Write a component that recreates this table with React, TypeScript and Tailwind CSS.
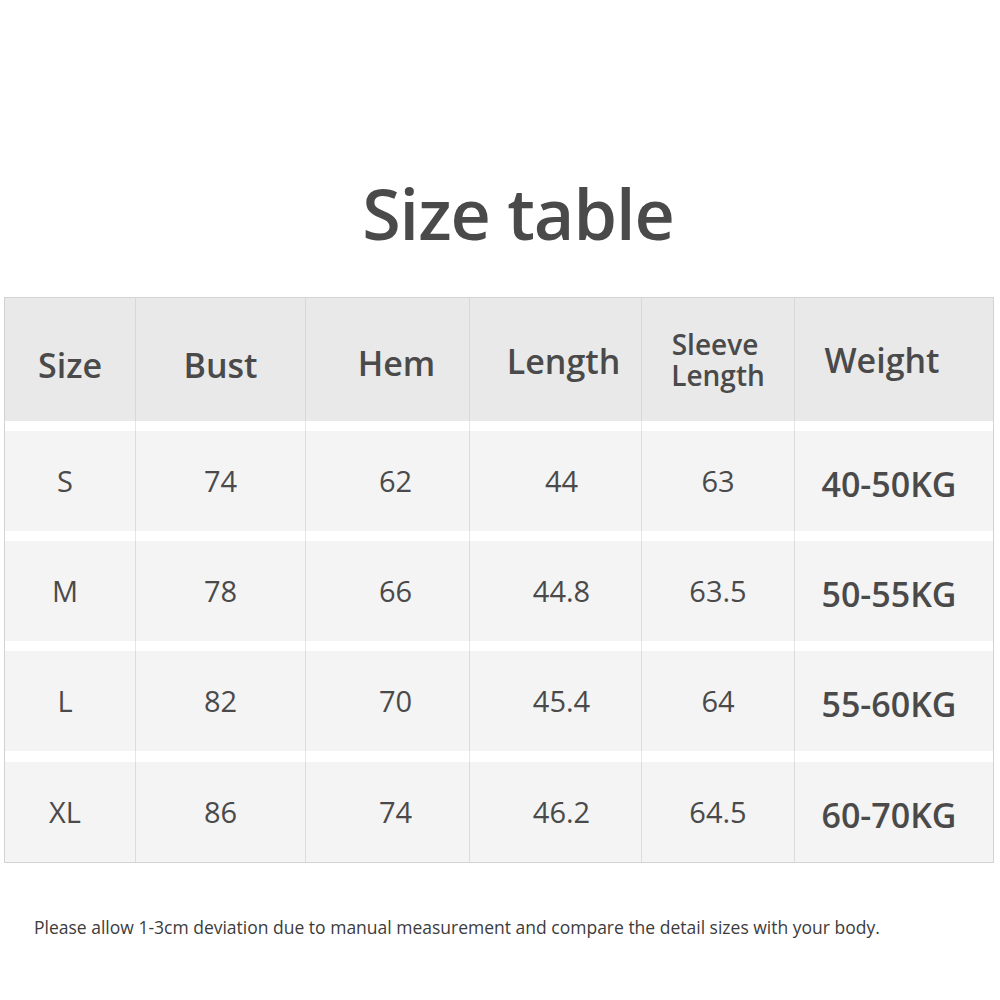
import React from "react";

const font = { fontFamily: '"Open Sans", "Noto Sans", sans-serif' };

type Row = { size: string; bust: string; hem: string; length: string; sleeve: string; weight: string };

const rows: Row[] = [
  { size: "S", bust: "74", hem: "62", length: "44", sleeve: "63", weight: "40-50KG" },
  { size: "M", bust: "78", hem: "66", length: "44.8", sleeve: "63.5", weight: "50-55KG" },
  { size: "L", bust: "82", hem: "70", length: "45.4", sleeve: "64", weight: "55-60KG" },
  { size: "XL", bust: "86", hem: "74", length: "46.2", sleeve: "64.5", weight: "60-70KG" },
];

function GapRow({ h }: { h: string }) {
  return (
    <div className={`flex ${h} bg-white`}>
      <div className="w-[131px] border-r border-[#e6e6e6]" />
      <div className="w-[170px] border-r border-[#e6e6e6]" />
      <div className="w-[164px] border-r border-[#e6e6e6]" />
      <div className="w-[172px] border-r border-[#e6e6e6]" />
      <div className="w-[153px] border-r border-[#e6e6e6]" />
      <div className="w-[198px]" />
    </div>
  );
}

function DataRow({ r }: { r: Row }) {
  return (
    <div className="flex h-[100px] bg-[#f4f4f4] text-[#4a4a4a]">
      <div className="w-[131px] border-r border-[#dcdcdc] flex items-center justify-center pr-[10px] text-[29px]">{r.size}</div>
      <div className="w-[170px] border-r border-[#dcdcdc] flex items-center justify-center text-[29px]">{r.bust}</div>
      <div className="w-[164px] border-r border-[#dcdcdc] flex items-center justify-center pl-[16px] text-[29px]">{r.hem}</div>
      <div className="w-[172px] border-r border-[#dcdcdc] flex items-center justify-center pl-[12px] text-[29px]">{r.length}</div>
      <div className="w-[153px] border-r border-[#dcdcdc] flex items-center justify-center text-[29px]">{r.sleeve}</div>
      <div className="w-[198px] flex items-center justify-center pr-[10px] pt-[6px] text-[34px] font-semibold">{r.weight}</div>
    </div>
  );
}

export default function App() {
  return (
    <div className="w-[1000px] h-[1000px] bg-white relative" style={font}>
      <div className="h-[297px] flex justify-center pt-[171px]">
        <h1 className="text-[70px] leading-[84px] font-semibold text-[#4a4a4a] pl-[36px] tracking-[-1px]">Size table</h1>
      </div>
      <div className="ml-[4px] w-[990px] border border-[#d2d2d2]">
        <div className="flex h-[123px] bg-[#e9e9e9] text-[#4a4a4a] font-semibold">
          <div className="w-[131px] border-r border-[#d8d8d8] flex items-center justify-center pt-[12px] text-[34px]">Size</div>
          <div className="w-[170px] border-r border-[#d8d8d8] flex items-center justify-center pt-[12px] text-[34px]">Bust</div>
          <div className="w-[164px] border-r border-[#d8d8d8] flex items-center justify-center pt-[8px] pl-[18px] text-[34px]">Hem</div>
          <div className="w-[172px] border-r border-[#d8d8d8] flex items-center justify-center pt-[4px] pl-[16px] text-[34px]">Length</div>
          <div className="w-[153px] border-r border-[#d8d8d8] flex flex-col items-center justify-center text-[28px] leading-[31px]">
            <span className="-ml-[6px]">Sleeve</span>
            <span>Length</span>
          </div>
          <div className="w-[198px] flex items-center justify-center pt-[2px] pr-[24px] text-[34px]">Weight</div>
        </div>
        <GapRow h="h-[10px]" />
        <DataRow r={rows[0]} />
        <GapRow h="h-[10px]" />
        <DataRow r={rows[1]} />
        <GapRow h="h-[10px]" />
        <DataRow r={rows[2]} />
        <GapRow h="h-[11px]" />
        <DataRow r={rows[3]} />
      </div>
      <p className="absolute left-[34px] top-[915px] text-[17.5px] leading-[24px] text-[#3c3c3c]">
        Please allow 1-3cm deviation due to manual measurement and compare the detail sizes with your body.
      </p>
    </div>
  );
}
